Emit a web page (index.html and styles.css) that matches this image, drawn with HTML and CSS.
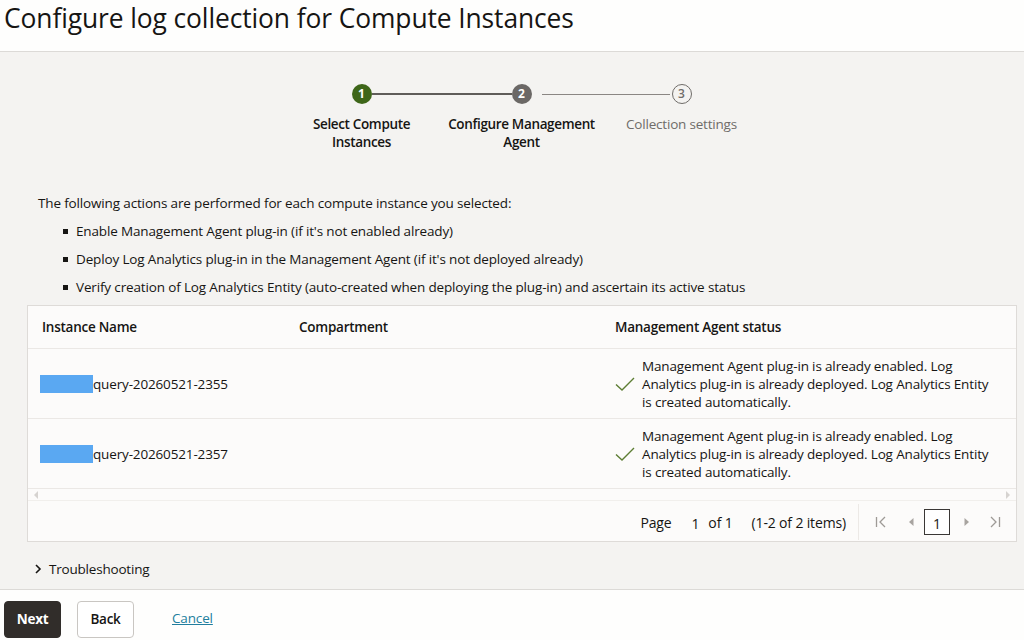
FILE: index.html
```html
<!DOCTYPE html>
<html>
<head>
<meta charset="utf-8">
<link rel="stylesheet" href="styles.css">
</head>
<body>
<div class="page">
  <header class="header">
    <h1 class="title">Configure log collection for Compute Instances</h1>
  </header>
  <main class="main">
    <div class="steps">
      <div class="step">
        <div class="step-top">
          <span class="seg seg-none"></span>
          <span class="dot dot-done">1</span>
          <span class="seg seg-dark"></span>
        </div>
        <div class="step-label">Select Compute<br>Instances</div>
      </div>
      <div class="step">
        <div class="step-top">
          <span class="seg seg-dark"></span>
          <span class="dot dot-current">2</span>
          <span class="seg seg-light seg-gap"></span>
        </div>
        <div class="step-label">Configure Management<br>Agent</div>
      </div>
      <div class="step">
        <div class="step-top">
          <span class="seg seg-light seg-end"></span>
          <span class="dot dot-todo">3</span>
          <span class="seg seg-none"></span>
        </div>
        <div class="step-label step-label-todo">Collection settings</div>
      </div>
    </div>

    <p class="intro">The following actions are performed for each compute instance you selected:</p>
    <ul class="actions">
      <li>Enable Management Agent plug-in (if it's not enabled already)</li>
      <li>Deploy Log Analytics plug-in in the Management Agent (if it's not deployed already)</li>
      <li>Verify creation of Log Analytics Entity (auto-created when deploying the plug-in) and ascertain its active status</li>
    </ul>

    <div class="table">
      <div class="row row-head">
        <div class="cell c1">Instance Name</div>
        <div class="cell c2">Compartment</div>
        <div class="cell c3">Management Agent status</div>
      </div>
      <div class="row row-body">
        <div class="cell c1"><span class="redact"></span>query-20260521-2355</div>
        <div class="cell c2"></div>
        <div class="cell c3 status">
          <svg class="check" width="20" height="16" viewBox="0 0 20 16"><path d="M1 8.5 L7 14 L19 2" fill="none" stroke="#5d7d33" stroke-width="1.4"/></svg>
          <span>Management Agent plug-in is already enabled. Log Analytics plug-in is already deployed. Log Analytics Entity is created automatically.</span>
        </div>
      </div>
      <div class="row row-body">
        <div class="cell c1"><span class="redact"></span>query-20260521-2357</div>
        <div class="cell c2"></div>
        <div class="cell c3 status">
          <svg class="check" width="20" height="16" viewBox="0 0 20 16"><path d="M1 8.5 L7 14 L19 2" fill="none" stroke="#5d7d33" stroke-width="1.4"/></svg>
          <span>Management Agent plug-in is already enabled. Log Analytics plug-in is already deployed. Log Analytics Entity is created automatically.</span>
        </div>
      </div>
      <div class="hscroll">
        <svg width="6" height="8" viewBox="0 0 6 8"><path d="M5 0 L1 4 L5 8 Z" fill="#d6d3d0"/></svg>
        <svg width="6" height="8" viewBox="0 0 6 8"><path d="M1 0 L5 4 L1 8 Z" fill="#d6d3d0"/></svg>
      </div>
      <div class="pager">
        <span class="pg-label">Page</span>
        <span class="pg-num">1</span>
        <span class="pg-of">of 1</span>
        <span class="pg-items">(1-2 of 2 items)</span>
        <span class="pg-sep"></span>
        <svg class="pg-ico pg-first" width="14" height="14" viewBox="0 0 14 14"><path d="M2.5 2 V12 M11 2 L6 7 L11 12" fill="none" stroke="#9e9a96" stroke-width="1.3"/></svg>
        <svg class="pg-ico pg-prev" width="8" height="14" viewBox="0 0 8 14"><path d="M6.5 3 L2 7 L6.5 11 Z" fill="#a8a4a0"/></svg>
        <span class="pg-box">1</span>
        <svg class="pg-ico pg-next" width="8" height="14" viewBox="0 0 8 14"><path d="M1.5 3 L6 7 L1.5 11 Z" fill="#a8a4a0"/></svg>
        <svg class="pg-ico pg-last" width="14" height="14" viewBox="0 0 14 14"><path d="M3 2 L8 7 L3 12 M11.5 2 V12" fill="none" stroke="#9e9a96" stroke-width="1.3"/></svg>
      </div>
    </div>

    <div class="trouble">
      <svg width="8" height="12" viewBox="0 0 8 12"><path d="M2 2 L6 6 L2 10" fill="none" stroke="#161513" stroke-width="1.6"/></svg>
      <span>Troubleshooting</span>
    </div>
  </main>
  <footer class="footer">
    <button class="btn btn-primary">Next</button>
    <button class="btn btn-outline">Back</button>
    <a class="link" href="#">Cancel</a>
  </footer>
</div>
</body>
</html>
```

FILE: styles.css
```css
* { box-sizing: border-box; }
html, body { margin: 0; padding: 0; }
body {
  font-family: "Open Sans", "Noto Sans", sans-serif;
  color: #161513;
  font-size: 14px;
  background: #f4f3f1;
}
.page {
  height: 640px;
  display: flex;
  flex-direction: column;
  overflow: hidden;
}
.header {
  height: 52px;
  background: #fefefd;
  border-bottom: 1px solid #dcdad7;
  padding: 1px 0 0 4px;
  flex: none;
}
.title {
  margin: 0;
  font-size: 26.4px;
  font-weight: 400;
  line-height: 34px;
  letter-spacing: -0.1px;
}
.main {
  flex: 1;
  background: #f4f3f1;
  padding: 32px 8px 0 27px;
  display: flex;
  flex-direction: column;
}
.steps {
  display: flex;
  justify-content: center;
}
.step {
  width: 160px;
  display: flex;
  flex-direction: column;
  align-items: center;
}
.step-top {
  display: flex;
  align-items: center;
  width: 160px;
  height: 20px;
}
.seg { width: 70px; height: 1px; flex: none; }
.seg-none { background: transparent; }
.seg-dark { background: #5f5c59; height: 1.5px; }
.seg-light { background: #8a8683; }
.seg-gap { margin-left: 10px; width: 60px; }
.seg-end { margin-right: 2px; width: 68px; }
.dot {
  width: 20px;
  height: 20px;
  border-radius: 50%;
  display: flex;
  align-items: center;
  justify-content: center;
  font-size: 12px;
  font-weight: 700;
  line-height: 1;
  flex: none;
}
.dot-done { background: #3e6619; color: #fff; }
.dot-current { background: #6b6866; color: #fff; }
.dot-todo { border: 1.5px solid #6f6c69; color: #6f6c69; font-weight: 600; }
.step-label {
  margin-top: 11px;
  text-align: center;
  font-size: 13.5px;
  line-height: 18px;
  font-weight: 600;
  letter-spacing: -0.35px;
}
.step-label-todo { color: #6f6c69; font-weight: 400; letter-spacing: -0.2px; }
.intro {
  margin: 38px 0 0 11px;
  line-height: 28px;
  font-size: 13.5px;
  letter-spacing: -0.15px;
}
.actions {
  margin: 0 0 4px 0;
  padding: 0 0 0 49px;
  list-style: none;
  font-size: 13.5px;
  letter-spacing: -0.15px;
}
.actions li {
  line-height: 28px;
  position: relative;
}
.actions li::before {
  content: "";
  position: absolute;
  left: -13px;
  top: 12px;
  width: 5px;
  height: 5px;
  background: #161513;
}
.table {
  width: 990px;
  background: #fcfbfa;
  border: 1px solid #dedbd8;
}
.row {
  display: flex;
  border-bottom: 1px solid #ebe8e5;
}
.row-head {
  height: 43px;
  align-items: center;
  font-weight: 600;
  font-size: 13.5px;
  letter-spacing: -0.25px;
}
.row-body {
  height: 70px;
  align-items: center;
  font-size: 13.5px;
  letter-spacing: -0.15px;
}
.cell { padding-left: 14px; }
.c1 { width: 257px; display: flex; align-items: center; padding-left: 12px; }
.row-head .c1 { padding-left: 14px; }
.c2 { width: 316px; }
.c3 { flex: 1; padding-left: 14px; padding-right: 18px; }
.redact {
  display: inline-block;
  width: 53px;
  height: 18px;
  background: #5aa8f2;
}
.status {
  display: flex;
  align-items: center;
  gap: 7px;
  line-height: 18px;
}
.check { flex: none; margin-top: 1px; }
.hscroll {
  height: 12px;
  display: flex;
  justify-content: space-between;
  align-items: center;
  padding: 0 5px;
  border-bottom: 1px solid #f1efec;
}
.pager {
  height: 40px;
  display: flex;
  align-items: center;
  justify-content: flex-end;
  padding: 2px 14px 0 0;
  font-size: 14px;
  letter-spacing: -0.15px;
}
.pg-num { margin-left: 20px; margin-top: 2px; }
.pg-of { margin-left: 9px; }
.pg-items { margin-left: 19px; }
.pg-sep {
  width: 1px;
  height: 36px;
  background: #ece9e6;
  margin-left: 12px;
}
.pg-first { margin-left: 15px; }
.pg-prev { margin-left: 19px; }
.pg-box {
  width: 26px;
  height: 26px;
  border: 1px solid #3a3735;
  display: flex;
  align-items: center;
  justify-content: center;
  margin-left: 9px;
  padding-top: 2px;
  background: #fff;
}
.pg-next { margin-left: 13px; }
.pg-last { margin-left: 17px; }
.trouble {
  display: flex;
  align-items: center;
  gap: 7px;
  margin: 18px 0 0 7px;
  font-size: 13.5px;
  letter-spacing: -0.2px;
}
.footer {
  height: 51px;
  flex: none;
  background: #fefefd;
  border-top: 1px solid #dcdad7;
  display: flex;
  align-items: center;
  padding: 0 0 0 4px;
}
.btn {
  height: 37px;
  font-family: inherit;
  font-size: 13.5px;
  font-weight: 700;
  border-radius: 4px;
  padding: 0;
  margin-top: 8px;
  letter-spacing: -0.3px;
}
.btn-primary {
  background: #312d2a;
  color: #fff;
  border: 1px solid #312d2a;
  width: 57px;
}
.btn-outline {
  background: #fff;
  color: #161513;
  border: 1px solid #c9c6c2;
  width: 57px;
  margin-left: 16px;
  font-weight: 600;
}
.link {
  margin-left: 38px;
  margin-top: 6px;
  color: #227e9e;
  font-size: 13.5px;
  letter-spacing: -0.15px;
  text-decoration: underline;
}
```
